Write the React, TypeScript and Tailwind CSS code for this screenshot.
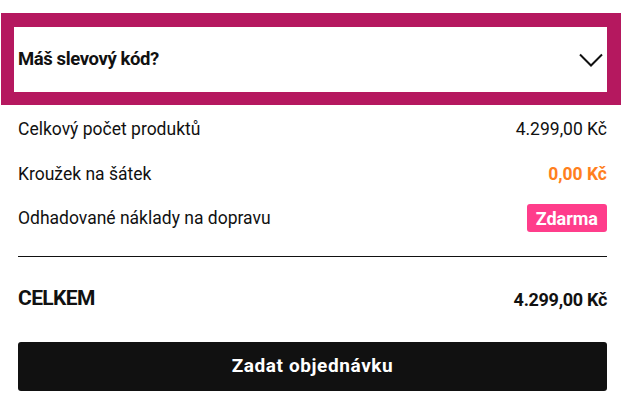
const rows = [
  { label: 'Celkový počet produktů', value: '4.299,00 Kč', kind: 'plain' },
  { label: 'Kroužek na šátek', value: '0,00 Kč', kind: 'orange' },
  { label: 'Odhadované náklady na dopravu', value: 'Zdarma', kind: 'badge' },
];

export default function App() {
  return (
    <main className="w-[627px] h-[405px] bg-white pt-[13px] font-['Roboto',sans-serif] text-[#111]">
      {/* Discount code accordion */}
      <div className="ml-px w-[620px] border-[13px] border-t-[14px] border-r-[14px] border-[#b5185f] bg-white">
        <button className="flex h-[65px] w-full items-center justify-between pl-[4px] pr-[4px] cursor-pointer">
          <span className="text-[18.5px] font-bold tracking-[-0.4px]">Máš slevový kód?</span>
          <svg width="24" height="14" viewBox="0 0 24 14" fill="none" stroke="currentColor" strokeWidth="2" className="mt-[1px]">
            <polyline points="1,1.5 12,12.5 23,1.5" />
          </svg>
        </button>
      </div>

      <section className="mx-[18px] mt-[2px] w-[589px]">
        {rows.map(r => (
          <div key={r.label} className="flex h-[44.5px] items-center justify-between">
            <span className="text-[17.5px]">{r.label}</span>
            {r.kind === 'plain' && <span className="text-[17.5px]">{r.value}</span>}
            {r.kind === 'orange' && (
              <span className="text-[17.5px] font-bold text-[#ff7f1e]">{r.value}</span>
            )}
            {r.kind === 'badge' && (
              <span className="flex h-[28px] items-center rounded-[3px] bg-[#ff3d8b] px-[9px] text-[18px] font-bold text-white">
                {r.value}
              </span>
            )}
          </div>
        ))}

        <div className="mt-[15px] border-t border-[#111]" />

        <div className="flex h-[85px] items-center justify-between">
          <span className="text-[21px] font-bold tracking-[-0.6px]">CELKEM</span>
          <span className="text-[18px] font-bold tracking-[-0.3px]">4.299,00 Kč</span>
        </div>

        <button className="flex h-[49px] w-full items-center justify-center rounded-[3px] bg-[#111] text-[19px] font-bold tracking-[0.6px] text-white cursor-pointer">
          Zadat objednávku
        </button>
      </section>
    </main>
  );
}
